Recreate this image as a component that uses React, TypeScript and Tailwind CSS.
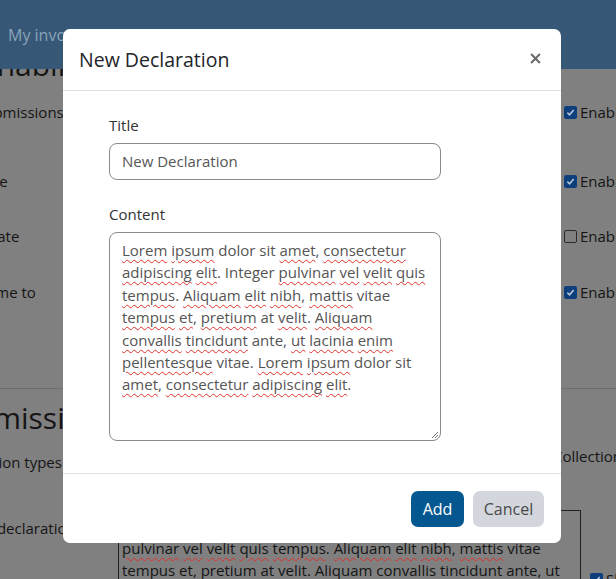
import React from 'react'

const font = { fontFamily: '"Open Sans", "Noto Sans", sans-serif' }

// words the spellchecker flags get a wavy red underline
function Spell({ children }: { children: React.ReactNode }) {
  return (
    <span className="underline decoration-wavy decoration-[#e0302c] decoration-1 underline-offset-[3px]">
      {children}
    </span>
  )
}

function Check({ checked }: { checked: boolean }) {
  return checked ? (
    <span className="inline-flex shrink-0 w-[13px] h-[13px] rounded-[2px] bg-[#0c3f7c] items-center justify-center">
      <svg width="9" height="9" viewBox="0 0 10 10">
        <path d="M1.5 5.2 L4 7.5 L8.5 2.3" stroke="#b9c6d6" strokeWidth="1.8" fill="none" />
      </svg>
    </span>
  ) : (
    <span className="inline-block shrink-0 w-[13px] h-[13px] rounded-[2px] border border-[#2a2a2a]" />
  )
}

function SettingRow({
  label,
  checked,
  top,
  shift,
}: {
  label: string
  checked: boolean
  top: string
  shift: string
}) {
  return (
    <div className={`flex items-center ${top}`}>
      <span className={`flex-1 whitespace-nowrap text-[15px] leading-[20px] text-[#151515] ${shift}`}>{label}</span>
      <span className="w-[52px] shrink-0 flex items-center gap-[3px] whitespace-nowrap text-[15px] leading-[20px] text-[#151515]">
        <Check checked={checked} />
        Enable
      </span>
    </div>
  )
}

function Background() {
  return (
    <div className="w-[616px] h-[579px] bg-[#808080] overflow-hidden" style={font}>
      <div className="h-[69px] bg-[#365775] flex items-center pl-[8px]">
        <span className="text-[16px] text-[#8aa3ba]">My involvement</span>
      </div>
      <div className="h-[8px] overflow-hidden">
        <div className="-mt-[27px] -ml-[20px] text-[30px] text-[#151515] whitespace-nowrap">Enabling</div>
      </div>
      <div>
        <SettingRow label="Submissions" checked top="mt-[25px]" shift="-ml-[24px]" />
        <SettingRow label="Due date" checked top="mt-[49px]" shift="-ml-[56px]" />
        <SettingRow label="Update" checked={false} top="mt-[35px]" shift="-ml-[32px]" />
        <SettingRow label="Welcome to" checked top="mt-[36px]" shift="-ml-[47px]" />
      </div>
      <div className="mt-[86px] border-t border-[#6e6e6e]" />
      <div className="mt-[11px] -ml-[60px] text-[30px] leading-[36px] text-[#151515] whitespace-nowrap">Submissions</div>
      <div className="flex justify-between mt-[9px]">
        <span className="-ml-[60px] mt-[6px] text-[15px] text-[#151515] whitespace-nowrap">Declaration types</span>
        <span className="-mr-[6px] text-[15px] text-[#151515] whitespace-nowrap">Collection</span>
      </div>
      <div className="flex mt-[36px]">
        <span className="-ml-[58px] mt-[7px] w-[176px] shrink-0 whitespace-nowrap text-[15px] text-[#151515]">
          Default declaration
        </span>
        <div className="w-[463px] h-[90px] shrink-0 border border-[#222] pl-[3px] pt-[26px] text-[15px] leading-[22px] text-[#151515] whitespace-nowrap">
          <div>
            <Spell>pulvinar</Spell> <Spell>vel</Spell> <Spell>velit</Spell> <Spell>quis</Spell>{' '}
            <Spell>tempus</Spell>. <Spell>Aliquam</Spell> <Spell>elit</Spell> <Spell>nibh</Spell>,{' '}
            <Spell>mattis</Spell> vitae
          </div>
          <div>
            <Spell>tempus</Spell> <Spell>et</Spell>, <Spell>pretium</Spell> at <Spell>velit</Spell>.{' '}
            <Spell>Aliquam</Spell> <Spell>convallis</Spell> <Spell>tincidunt</Spell> ante, <Spell>ut</Spell>
          </div>
        </div>
        <span className="ml-[9px] mt-[50px] flex items-center gap-[3px] whitespace-nowrap text-[15px] text-[#151515]">
          <Check checked />
          Show
        </span>
      </div>
    </div>
  )
}

function Modal() {
  return (
    <div className="absolute inset-0 pl-[63px] pt-[29px]" style={font}>
      <div className="w-[498px] h-[514px] bg-white rounded-[7px] flex flex-col">
        <div className="h-[62px] flex items-center justify-between pl-[16px] pr-[20px] border-b border-[#dee2e6]">
          <h2 className="text-[19.5px] text-[#212529]">New Declaration</h2>
          <svg width="11" height="11" viewBox="0 0 10 10" className="mt-[-2px]">
            <path d="M1 1 L9 9 M9 1 L1 9" stroke="#6c6c6c" strokeWidth="1.9" />
          </svg>
        </div>
        <div className="flex-1 pl-[46px] pt-[24px]">
          <div className="w-[332px]">
            <label className="block text-[15px] text-[#333] leading-[20px]">Title</label>
            <div className="mt-[8px] h-[37px] rounded-[8px] border border-[#8a8a8a] flex items-center px-[12px] text-[15px] text-[#555]">
              New Declaration
            </div>
            <label className="block mt-[24px] text-[15px] text-[#333] leading-[20px]">Content</label>
            <div className="relative mt-[8px] h-[209px] rounded-[8px] border border-[#8a8a8a] pl-[12px] pr-[8px] pt-[6px] text-[15px] leading-[22.4px] text-[#555]">
              <Spell>Lorem</Spell> <Spell>ipsum</Spell> dolor sit <Spell>amet</Spell>, <Spell>consectetur</Spell>{' '}
              <Spell>adipiscing</Spell> <Spell>elit</Spell>. Integer <Spell>pulvinar</Spell> <Spell>vel</Spell>{' '}
              <Spell>velit</Spell> <Spell>quis</Spell> <Spell>tempus</Spell>. <Spell>Aliquam</Spell>{' '}
              <Spell>elit</Spell> <Spell>nibh</Spell>, <Spell>mattis</Spell> vitae <Spell>tempus</Spell>{' '}
              <Spell>et</Spell>, <Spell>pretium</Spell> at <Spell>velit</Spell>. <Spell>Aliquam</Spell>{' '}
              <Spell>convallis</Spell> <Spell>tincidunt</Spell> ante, <Spell>ut</Spell> <Spell>lacinia</Spell>{' '}
              <Spell>enim</Spell> <Spell>pellentesque</Spell> vitae. <Spell>Lorem</Spell> <Spell>ipsum</Spell>{' '}
              dolor sit <Spell>amet</Spell>, <Spell>consectetur</Spell> <Spell>adipiscing</Spell> <Spell>elit</Spell>.
              <svg width="9" height="9" viewBox="0 0 9 9" className="absolute right-[1px] bottom-[1px]">
                <path d="M8 2 L2 8 M8 5 L5 8" stroke="#777" strokeWidth="1" />
              </svg>
            </div>
          </div>
        </div>
        <div className="h-[70px] border-t border-[#dee2e6] flex items-center justify-end gap-[9px] pr-[17px]">
          <button className="h-[36px] w-[53px] rounded-[7px] bg-[#04578f] text-white text-[16px]">Add</button>
          <button className="h-[36px] w-[71px] rounded-[7px] bg-[#d3d6dd] text-[#4a4a4a] text-[16px]">Cancel</button>
        </div>
      </div>
    </div>
  )
}

export default function App() {
  return (
    <div className="relative w-[616px] h-[579px]">
      <Background />
      <Modal />
    </div>
  )
}
